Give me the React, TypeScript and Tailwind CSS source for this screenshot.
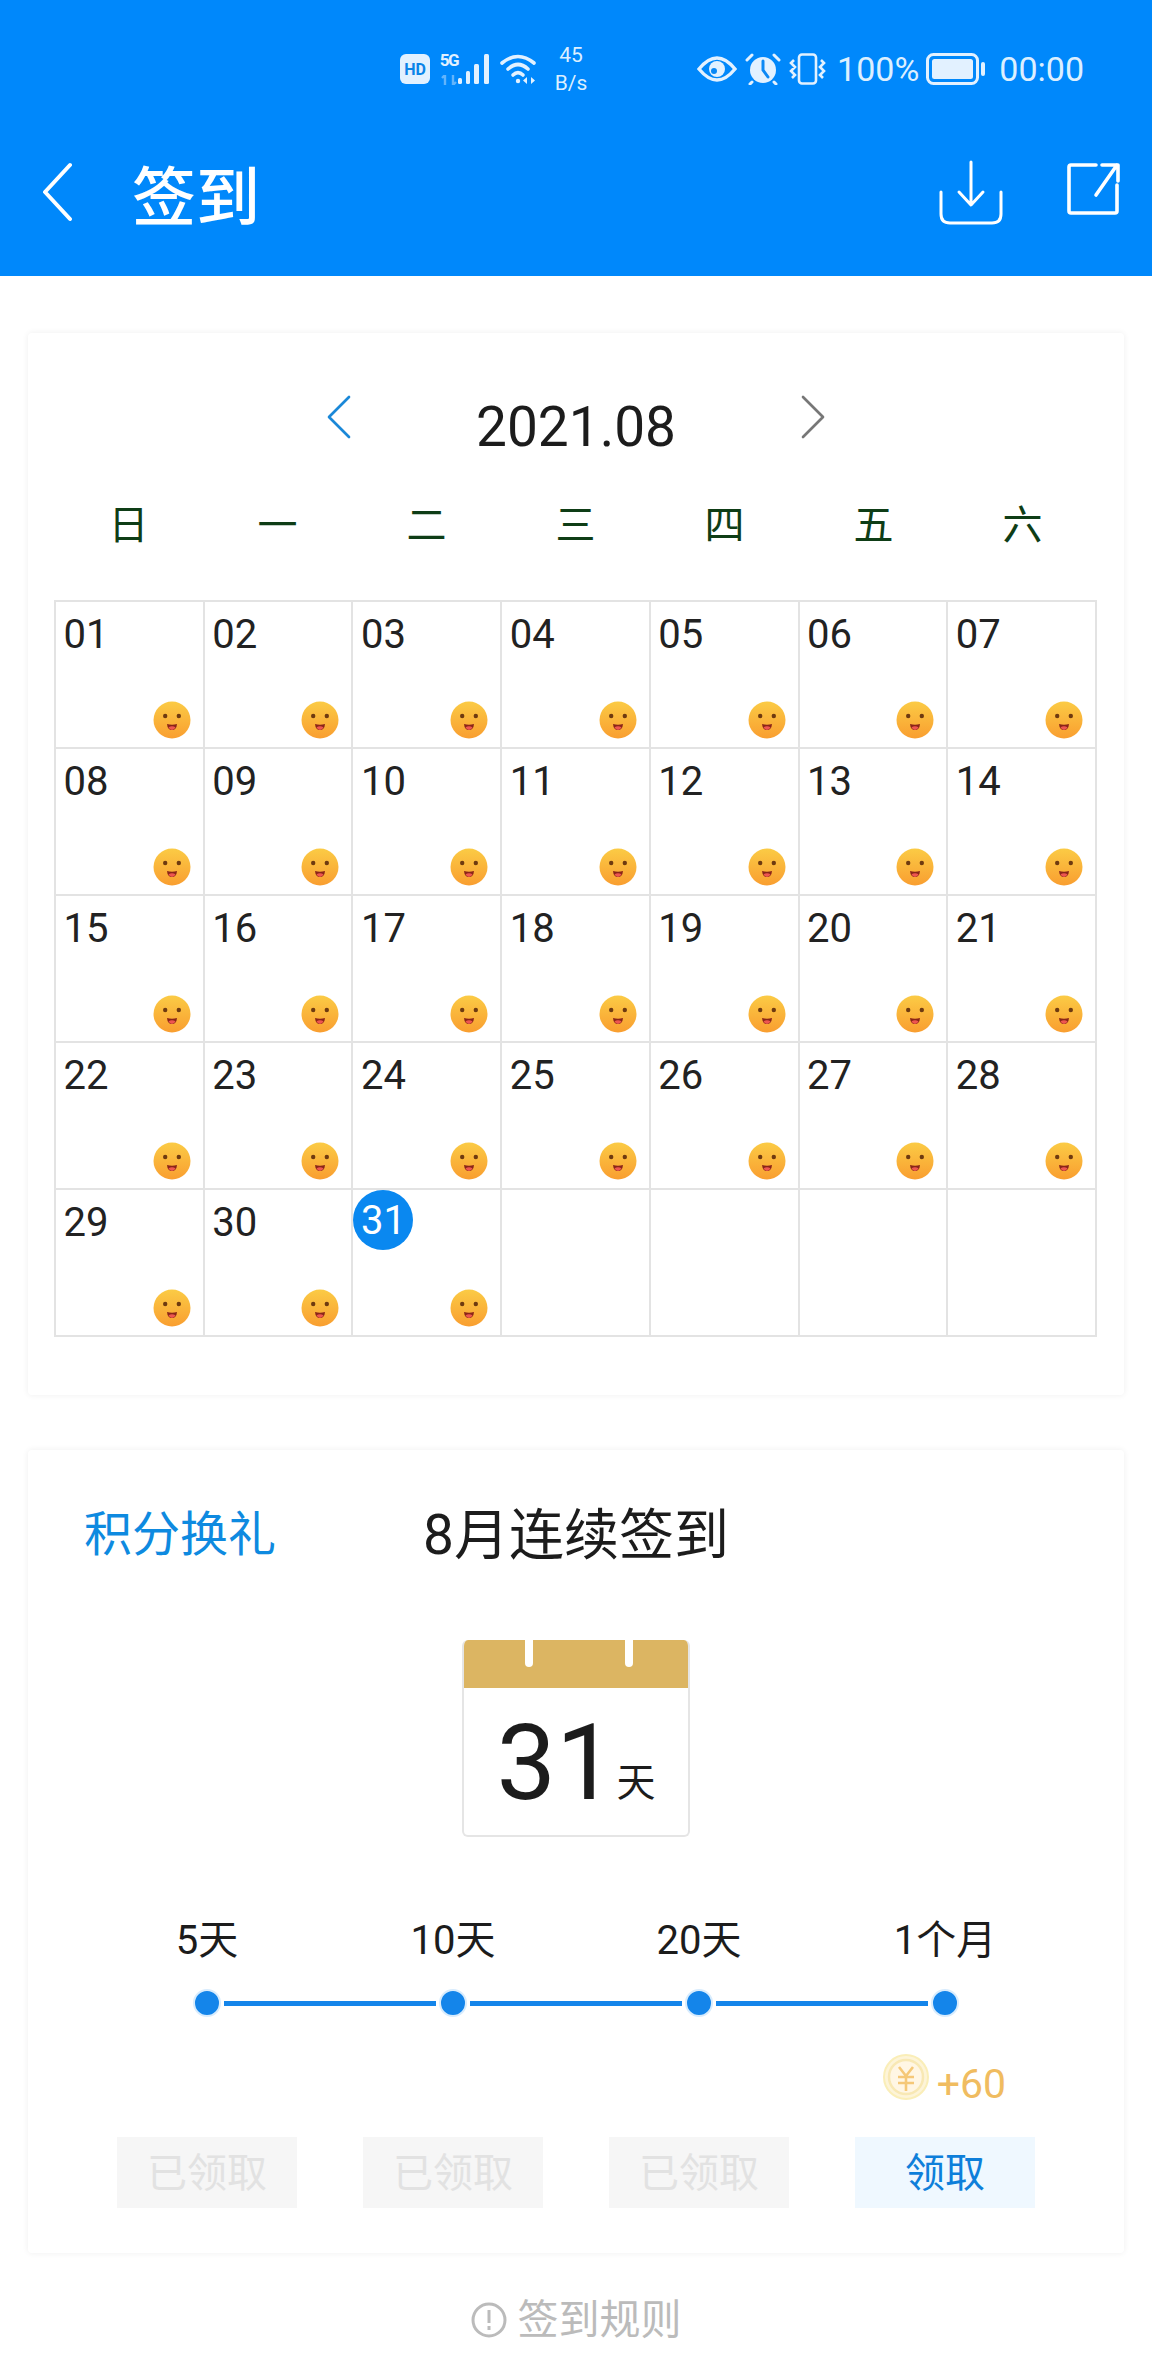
import { ChevronLeft, ChevronRight } from 'lucide-react'

const days = Array.from({ length: 31 }, (_, i) => String(i + 1).padStart(2, '0'))
const weekdays = ['日', '一', '二', '三', '四', '五', '六']
const milestones = [
  { label: '5天', action: '已领取', done: true },
  { label: '10天', action: '已领取', done: true },
  { label: '20天', action: '已领取', done: true },
  { label: '1个月', action: '领取', done: false },
]

function Smiley() {
  return (
    <svg width="38" height="38" viewBox="0 0 38 38">
      <defs>
        <linearGradient id="face" x1="0" y1="0" x2="0" y2="1">
          <stop offset="0" stopColor="#fbcb45" />
          <stop offset="1" stopColor="#f99e30" />
        </linearGradient>
      </defs>
      <circle cx="19" cy="19" r="18.5" fill="url(#face)" />
      <circle cx="12.2" cy="15" r="2.2" fill="#6e3a10" />
      <circle cx="25.8" cy="15" r="2.2" fill="#6e3a10" />
      <path d="M14 23 Q19 24.5 24 23 Q23.5 29 19 29 Q14.5 29 14 23 Z" fill="#8a2418" />
      <path d="M15.5 26.2 Q19 24.4 22.5 26.2 Q21.2 29 19 29 Q16.8 29 15.5 26.2 Z" fill="#ee5650" />
    </svg>
  )
}

function StatusLeft() {
  return (
    <div className="flex items-center">
      <svg width="30" height="30" viewBox="0 0 30 30">
        <rect width="30" height="30" rx="6" fill="#e2f1ff" />
        <text x="15" y="21" textAnchor="middle" fontSize="16" fontWeight="700" fill="#0a84e8" fontFamily="Roboto">HD</text>
      </svg>
      <div className="ml-[11px] flex h-[32px] w-[16px] flex-col items-center justify-between">
        <span className="text-[17px] font-bold leading-[14px] tracking-[-1.5px] text-[#e2f1ff]">5G</span>
        <svg width="16" height="10" viewBox="0 0 16 10">
          <path d="M4 0v10M1 3l3-3M12 0v10M15 7l-3 3" stroke="#62b4fb" strokeWidth="2.4" fill="none" />
        </svg>
      </div>
      <svg className="ml-[1px]" width="33" height="32" viewBox="0 0 33 32" fill="#e2f1ff">
        <rect x="0" y="25" width="4" height="6" rx="1.5" />
        <rect x="8" y="18" width="4" height="13" rx="1.5" />
        <rect x="16" y="11" width="5" height="20" rx="1.5" />
        <rect x="26" y="1" width="5" height="30" rx="1.5" />
      </svg>
      <svg className="ml-[9px]" width="38" height="32" viewBox="0 0 38 32" fill="none" stroke="#e2f1ff" strokeWidth="3.6" strokeLinecap="round">
        <path d="M2 10 Q18 -3 34 10" />
        <path d="M8 16 Q18 7 28 16" />
        <path d="M13 22 Q18 17 23 22" />
        <circle cx="18" cy="28" r="2.2" fill="#e2f1ff" stroke="none" />
        <path d="M27 24v7l-4-3.5zM31 24v7l4-3.5z" fill="#e2f1ff" stroke="none" />
      </svg>
      <div className="ml-[16px] flex w-[34px] flex-col items-center text-[21px] leading-[28px] text-[#dcefff]">
        <span>45</span>
        <span className="whitespace-nowrap">B/s</span>
      </div>
    </div>
  )
}

function StatusRight() {
  return (
    <div className="flex items-center">
      <svg width="40" height="28" viewBox="0 0 40 28" fill="none">
        <path d="M2 14 Q20 -8 38 14 Q20 36 2 14 Z" stroke="#e2f1ff" strokeWidth="3.4" />
        <circle cx="20" cy="14" r="8" fill="#e2f1ff" />
        <circle cx="17" cy="16" r="3" fill="#0a88f5" />
      </svg>
      <svg className="ml-[8px]" width="36" height="32" viewBox="0 0 36 32" fill="none" stroke="#e2f1ff" strokeWidth="3" strokeLinecap="round">
        <circle cx="18" cy="17" r="13" fill="#e2f1ff" stroke="none" />
        <path d="M18 8v9l5 7" stroke="#0a88f5" />
        <path d="M2 7 L7 2M34 7 L29 2M7 29l-2 2M29 29l2 2" />
      </svg>
      <svg className="ml-[7px]" width="40" height="32" viewBox="0 0 40 32" fill="none" stroke="#e2f1ff" strokeWidth="2.6">
        <rect x="11" y="1.5" width="17" height="29" rx="3" />
        <path d="M6 7 L3 10 L7 14 L3 18 L7 22 L4 25M33 7 L36 10 L32 14 L36 18 L32 22 L35 25" />
      </svg>
      <span className="ml-[9px] text-[34px] leading-[40px] text-[#dcefff]">100%</span>
      <svg className="ml-[7px]" width="60" height="32" viewBox="0 0 60 32" fill="none">
        <rect x="1.5" y="1.5" width="50" height="29" rx="6" stroke="#e2f1ff" strokeWidth="3" />
        <rect x="6" y="6" width="41" height="20" rx="2.5" fill="#e2f1ff" />
        <rect x="55" y="9" width="4" height="14" rx="2" fill="#e2f1ff" />
      </svg>
      <span className="ml-[13px] text-[34px] leading-[40px] text-[#dcefff]">00:00</span>
    </div>
  )
}

function Header() {
  return (
    <header className="h-[276px] bg-[#0088fb] pt-[41px] text-white">
      <div className="flex h-[56px] items-center pl-[400px] pr-[68px]">
        <StatusLeft />
        <div className="ml-auto">
          <StatusRight />
        </div>
      </div>
      <div className="mt-[49px] flex h-[80px] items-center pl-[42px] pr-[30px]">
        <svg className="mt-[12px]" width="30" height="60" viewBox="0 0 30 60" fill="none" stroke="white" strokeWidth="4" strokeLinecap="round" strokeLinejoin="round">
          <path d="M28 3 L3 30 L28 57" />
        </svg>
        <h1 className="ml-[60px] mt-[26px] text-[64px] font-medium leading-[80px]">签到</h1>
        <svg className="ml-auto mr-[-1px] mt-[14px]" width="66" height="66" viewBox="0 0 66 66" fill="none" stroke="white" strokeWidth="3" strokeLinecap="round" strokeLinejoin="round">
          <path d="M33 2 V44 M21 32 L33 45 L45 32" />
          <path d="M3 32 V54 Q3 63 12 63 H54 Q63 63 63 54 V32" />
        </svg>
        <svg className="ml-[63px] mt-[5px]" width="56" height="56" viewBox="0 0 56 56" fill="none" stroke="white" strokeWidth="3.6" strokeLinecap="round" strokeLinejoin="round">
          <path d="M30 4 H5 Q3 4 3 6 V50 Q3 52 5 52 H49 Q51 52 51 50 V24" />
          <path d="M30 34 L51 4 M36 4 H52 V20" />
        </svg>
      </div>
    </header>
  )
}

function CalendarCard() {
  return (
    <section className="h-[1062px] rounded-[4px] bg-white px-[26px] shadow-[0_0_6px_rgba(0,0,0,0.07)]">
      <div className="flex h-[126px] items-center justify-center pt-[62px]">
        <ChevronLeft className="mb-[20px] h-[80px] w-[80px] shrink-0 text-[#1a88d8]" strokeWidth={0.8} />
        <span className="mx-[97px] w-[200px] text-center text-[55px] leading-[60px] text-[#1c1c1c]">2021.08</span>
        <ChevronRight className="mb-[20px] h-[80px] w-[80px] shrink-0 text-[#777777]" strokeWidth={0.8} />
      </div>
      <div className="mt-[22px] grid h-[90px] w-[1043px] grid-cols-7 items-center">
        {weekdays.map((d) => (
          <span key={d} className="text-center text-[40px] leading-[50px] text-[#0e3d16]">{d}</span>
        ))}
      </div>
      <div className="mt-[29px] grid w-[1043px] grid-cols-7 border-b-2 border-r-2 border-[#e3e3e3]">
        {Array.from({ length: 35 }, (_, i) => {
          const day = days[i]
          const today = day === '31'
          return (
            <div key={i} className="flex h-[147px] flex-col justify-between border-l-2 border-t-2 border-[#e3e3e3]">
              {day && (
                <>
                  <span
                    className={
                      today
                        ? 'flex h-[60px] w-[60px] items-center justify-center rounded-full bg-[#0a88f0] pt-[2px] text-[40px] text-white'
                        : 'flex h-[66px] w-[60px] items-center justify-center text-[40px] text-[#222222]'
                    }
                  >
                    {day}
                  </span>
                  <div className="flex justify-end pb-[8px] pr-[12px]">
                    <Smiley />
                  </div>
                </>
              )}
            </div>
          )
        })}
      </div>
    </section>
  )
}

function StreakCard() {
  return (
    <section className="mt-[55px] h-[803px] rounded-[4px] bg-white shadow-[0_0_6px_rgba(0,0,0,0.07)]">
      <div className="flex items-center pl-[56px] pt-[55px]">
        <span className="text-[48px] leading-[60px] text-[#0e8ae0]">积分换礼</span>
        <span className="ml-[147px] text-[55px] leading-[60px] text-[#1c1c1c]">8月连续签到</span>
      </div>
      <div className="mx-auto mt-[75px] w-[228px] overflow-hidden rounded-[6px] border-2 border-t-0 border-[#e5e5e5] bg-white">
        <div className="-mx-[2px] flex h-[48px] justify-center gap-[92px] bg-[#dcb562] pl-[6px]">
          <div className="h-[27px] w-[8px] rounded-b-[4px] bg-white" />
          <div className="h-[27px] w-[8px] rounded-b-[4px] bg-white" />
        </div>
        <div className="flex h-[147px] items-end justify-center pb-[16px]">
          <span className="text-[106px] leading-[112px] text-[#1c1c1c]">31</span>
          <span className="mb-[12px] ml-[1px] text-[39px] leading-[48px] text-[#1c1c1c]">天</span>
        </div>
      </div>
      <div className="mt-[80px] flex justify-center">
        {milestones.map((m, i) => (
          <div key={m.label} className="flex w-[246px] flex-col items-center">
            <span className="h-[48px] whitespace-nowrap text-[40px] leading-[48px] text-[#1c1c1c]">{m.label}</span>
            <div className="relative mt-[20px] flex h-[36px] w-full items-center justify-center">
              {i > 0 && <div className="absolute left-[-106px] h-[5px] w-[212px] bg-[#1485ea]" />}
              <div className="h-[28px] w-[28px] rounded-full border-2 border-[#d8ecfd] bg-[#1485ea]" />
            </div>
          </div>
        ))}
      </div>
      <div className="mt-[30px] flex h-[60px] items-center justify-end pr-[118px]">
        <svg className="mb-[8px]" width="46" height="46" viewBox="0 0 46 46" fill="none">
          <circle cx="23" cy="23" r="22" fill="#fdf4d8" stroke="#faeeb8" strokeWidth="2" />
          <circle cx="23" cy="23" r="17" fill="#fff6e4" stroke="#f8e8b4" strokeWidth="2.5" />
          <path d="M16 13 L23 22 L30 13 M15 23 H31 M15 29 H31 M23 22 V37" stroke="#f5c878" strokeWidth="2.6" />
        </svg>
        <span className="ml-[8px] mt-[5px] text-[41px] leading-[60px] text-[#f0bc60]">+60</span>
      </div>
      <div className="mt-[26px] flex justify-center">
        {milestones.map((m) => (
          <div key={m.label} className="flex w-[246px] justify-center">
            <div
              className={
                m.done
                  ? 'flex h-[71px] w-[180px] items-center justify-center bg-[#f6f6f6] pt-[2px] text-[40px] text-[#e2e2e2]'
                  : 'flex h-[71px] w-[180px] items-center justify-center bg-[#eff8ff] pt-[2px] text-[40px] text-[#0e7fda]'
              }
            >
              {m.action}
            </div>
          </div>
        ))}
      </div>
    </section>
  )
}

export default function App() {
  return (
    <div className="h-[2376px] w-[1152px] overflow-hidden bg-white [font-family:Roboto,'Noto_Sans_CJK_SC',sans-serif]">
      <Header />
      <main className="px-[28px] pt-[57px]">
        <CalendarCard />
        <StreakCard />
        <div className="mt-[42px] flex h-[50px] items-center justify-center text-[#bbbbbb]">
          <svg width="36" height="36" viewBox="0 0 36 36" fill="none" stroke="#bbbbbb" strokeWidth="3">
            <circle cx="18" cy="18" r="16" />
            <path d="M18 8 V21 M18 24 V28" />
          </svg>
          <span className="ml-[11px] text-[41px] leading-[50px]">签到规则</span>
        </div>
      </main>
    </div>
  )
}
